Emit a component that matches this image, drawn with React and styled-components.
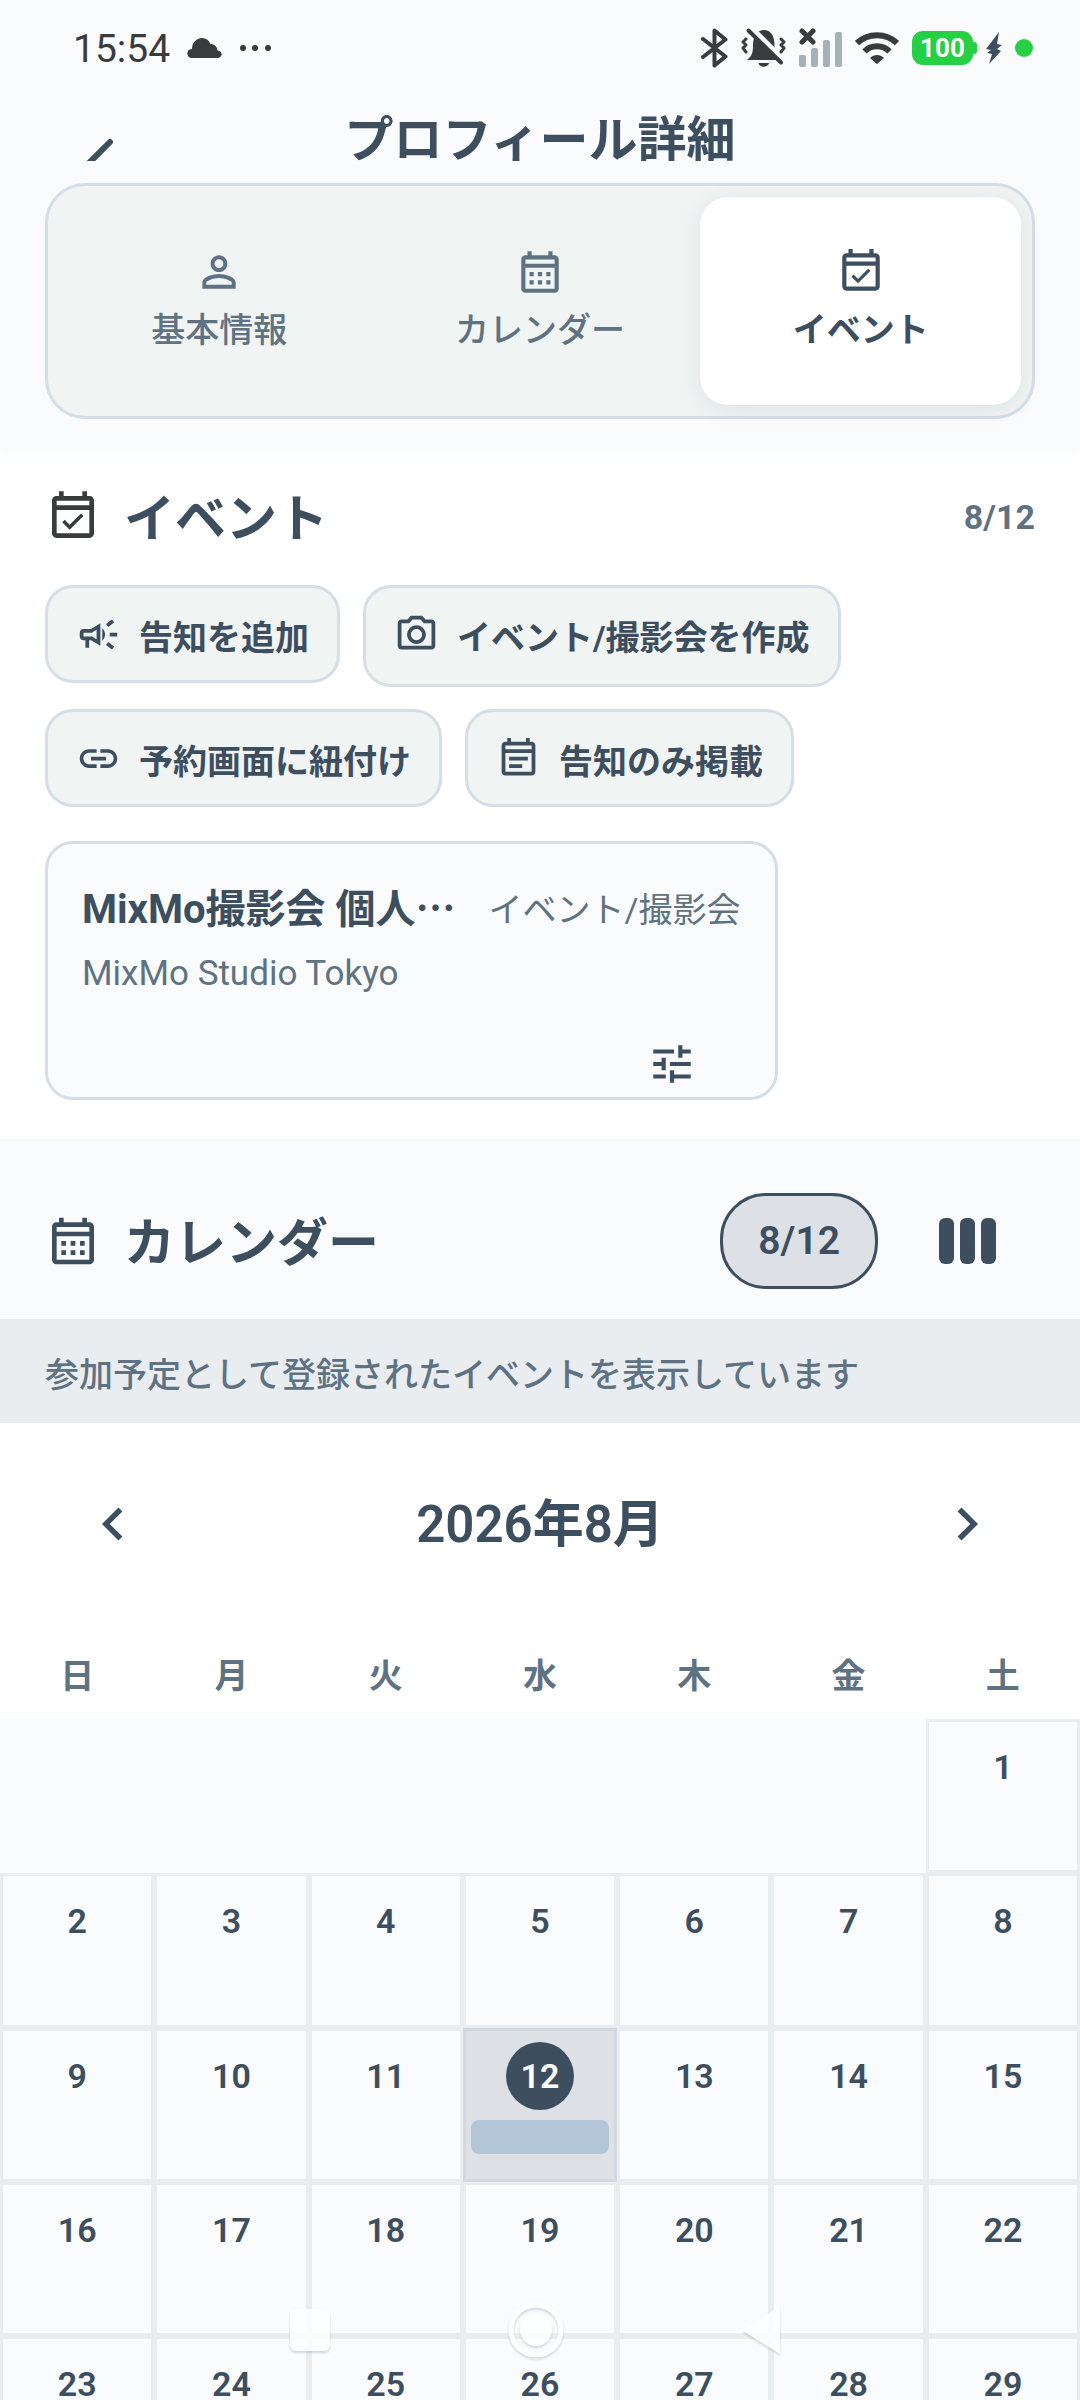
import { useState } from "react";
import styled, { createGlobalStyle } from "styled-components";
import {
    MdChevronLeft,
    MdChevronRight,
    MdLink,
    MdOutlineCalendarMonth,
    MdOutlineCampaign,
    MdOutlineEventAvailable,
    MdOutlineEventNote,
    MdOutlinePhotoCamera,
    MdPersonOutline,
    MdTune
} from "react-icons/md";

const tabs = [
    { id: "info", label: "基本情報", Icon: MdPersonOutline },
    { id: "calendar", label: "カレンダー", Icon: MdOutlineCalendarMonth },
    { id: "event", label: "イベント", Icon: MdOutlineEventAvailable }
];

const actions = [
    { label: "告知を追加", Icon: MdOutlineCampaign },
    { label: "イベント/撮影会を作成", Icon: MdOutlinePhotoCamera, tall: true },
    { label: "予約画面に紐付け", Icon: MdLink },
    { label: "告知のみ掲載", Icon: MdOutlineEventNote }
];

const weekdays = ["日", "月", "火", "水", "木", "金", "土"];
const emptyDays = [0, 1, 2, 3, 4, 5];
const days = Array.from({ length: 29 }, (_, i) => i + 1);

function StatusIcons() {
    return (
        <StatusGroup $gap={13}>
            <svg width="27" height="40" viewBox="0 0 27 40" fill="none" stroke="#3a3b3c" strokeWidth="4" strokeLinecap="round" strokeLinejoin="round">
                <path d="M2 11 L24.500 28.500 L13.500 37.500 V2.500 L24.500 11.500 L2 29" />
            </svg>
            <svg width="45" height="40" viewBox="0 0 45 40" fill="none" strokeLinecap="round" strokeLinejoin="round">
                <path d="M6 32 C11 28 12 25 12 17 C12 7 17 2 23 2 C29 2 33.500 7 33.500 17 C33.500 25 34 28 39 32 Z" fill="#3a3b3c" />
                <path d="M17.500 35 H28 C27 40 18.500 40 17.500 35 Z" fill="#3a3b3c" />
                <path d="M9 -1 L44 34" stroke="#f9fbfd" strokeWidth="6" />
                <path d="M7.500 2.500 L40 34.500" stroke="#3a3b3c" strokeWidth="4" />
                <path d="M5 11 L2 14 L5 17 L2 20 L5 24 M40 24 L43 20 L40 17 L43 14 L40 11" stroke="#3a3b3c" strokeWidth="3" />
            </svg>
            <svg width="43" height="40" viewBox="0 0 43 40">
                <g fill="#a5b0b7">
                    <rect x="0" y="27" width="7" height="12" rx="2" />
                    <rect x="12" y="20" width="7" height="19" rx="2" />
                    <rect x="24" y="12" width="7" height="27" rx="2" />
                    <rect x="36" y="4" width="7" height="35" rx="2" />
                </g>
                <path d="M3 3 L14 14 M14 3 L3 14" stroke="#3a3b3c" strokeWidth="5" strokeLinecap="round" />
            </svg>
            <svg width="44" height="32" viewBox="0 0 44 32" fill="none" stroke="#3a3b3c" strokeWidth="6">
                <path d="M2 11 C13 0.500 31 0.500 42 11" />
                <path d="M9.500 19.500 C16 12.500 28 12.500 34.500 19.500" />
                <path d="M15 26 C19 22 25 22 29 26 L22 32 Z" fill="#3a3b3c" stroke="none" />
            </svg>
            <StatusGroup $gap={8}>
                <Battery>100</Battery>
                <svg width="16" height="32" viewBox="0 0 16 32" fill="#3d4e5f">
                    <path d="M13 0 L0 17 L5 18 L1 21 L6 22 L3 32 L15 19 L11 17 L16 13 L11 12 Z" />
                </svg>
            </StatusGroup>
            <Dot />
        </StatusGroup>
    )
}

export default function App() {

    const [tab, setTab] = useState("event");
    const [selected, setSelected] = useState(12);

    return (
        <Screen>
            <GlobalStyle />

            <StatusBar>
                <StatusGroup $gap={17}>
                    <Clock>15:54</Clock>
                    <svg width="35" height="20" viewBox="0 0 35 20" fill="#3a3b3c">
                        <path d="M4 20 C-1 19 -1 11 5 11 C5 4 10 0 15 0 C19 0 22 2 23.500 6 C27 6 30 8 30.500 12.500 C36 13 36 19 31 20 Z" />
                    </svg>
                    <svg width="33" height="8" viewBox="0 0 33 8" fill="#3a3b3c">
                        <circle cx="4" cy="4" r="3" />
                        <circle cx="16" cy="4" r="3" />
                        <circle cx="29" cy="4" r="3" />
                    </svg>
                </StatusGroup>
                <StatusIcons />
            </StatusBar>

            <AppBar>
                <BackButton type="button" aria-label="戻る">
                    <svg width="30" height="52" viewBox="0 0 30 52" fill="none" stroke="#3d4e5f" strokeWidth="6" strokeLinecap="round" strokeLinejoin="round">
                        <path d="M26 4 L4 26 L26 48" />
                    </svg>
                </BackButton>
                <h1>プロフィール詳細</h1>
            </AppBar>

            <TabArea>
                <TabList role="tablist">
                    {tabs.map(({ id, label, Icon }) =>
                        <Tab key={id} type="button" role="tab" aria-selected={tab === id} $active={tab === id} onClick={() => setTab(id)}>
                            <Icon size={50} />
                            <span>{label}</span>
                        </Tab>
                    )}
                </TabList>
            </TabArea>

            <Content>
                <EventSection>
                    <SectionHeader>
                        <SectionTitle $iconColor="#3a3b3c">
                            <MdOutlineEventAvailable size={56} />
                            <span>イベント</span>
                        </SectionTitle>
                        <EventDate>8/12</EventDate>
                    </SectionHeader>

                    <ActionList>
                        {actions.map(({ label, Icon, tall }) =>
                            <ActionButton key={label} type="button" $tall={tall}>
                                <Icon size={45} />
                                <span>{label}</span>
                            </ActionButton>
                        )}
                    </ActionList>

                    <EventCard>
                        <EventCardTop>
                            <h3>MixMo撮影会 個人<Ellipsis>…</Ellipsis></h3>
                            <EventKind>イベント/撮影会</EventKind>
                        </EventCardTop>
                        <p>MixMo Studio Tokyo</p>
                        <TuneButton type="button" aria-label="設定">
                            <MdTune size={50} />
                        </TuneButton>
                    </EventCard>
                </EventSection>

                <CalendarHeader>
                    <SectionTitle $iconColor="#3d4e5f">
                        <MdOutlineCalendarMonth size={56} />
                        <span>カレンダー</span>
                    </SectionTitle>
                    <CalendarTools>
                        <DatePill type="button">8/12</DatePill>
                        <ColumnsButton type="button" aria-label="表示切替">
                            <i></i>
                            <i></i>
                            <i></i>
                        </ColumnsButton>
                    </CalendarTools>
                </CalendarHeader>

                <Notice>参加予定として登録されたイベントを表示しています</Notice>

                <MonthBar>
                    <MonthButton type="button" aria-label="前の月"><MdChevronLeft size={66} /></MonthButton>
                    <h2>2026年8月</h2>
                    <MonthButton type="button" aria-label="次の月"><MdChevronRight size={66} /></MonthButton>
                </MonthBar>

                <WeekRow>
                    {weekdays.map((item) => <span key={item}>{item}</span>)}
                </WeekRow>

                <DayGrid>
                    {emptyDays.map((item) => <EmptyDay key={item} />)}
                    {days.map((item) =>
                        <Day key={item} type="button" $selected={selected === item} onClick={() => setSelected(item)}>
                            <DayNumber $selected={selected === item}>{item}</DayNumber>
                            {item === 12 && <EventBar />}
                        </Day>
                    )}
                </DayGrid>
            </Content>

            <NavBar>
                <svg width="40" height="43" viewBox="0 0 40 43" fill="#fff">
                    <rect width="40" height="42" rx="6" />
                </svg>
                <svg width="58" height="58" viewBox="0 0 58 58" fill="#fff">
                    <circle cx="29" cy="29" r="25" fill="none" stroke="#fff" strokeWidth="5" />
                    <circle cx="29" cy="29" r="16" />
                </svg>
                <svg width="40" height="50" viewBox="0 0 40 50" fill="#fff">
                    <path d="M1 26 L38 1 V49 Z" />
                </svg>
            </NavBar>
        </Screen>
    )
}

const GlobalStyle = createGlobalStyle`
    * {
        box-sizing: border-box;
    }
    body {
        margin: 0;
        font-family: Roboto, "Noto Sans CJK JP", sans-serif;
        color: #3d4e5f;
        background-color: #fff;
    }
    h1, h2, h3, p {
        margin: 0;
    }
    button {
        font-family: inherit;
        color: inherit;
        padding: 0;
        border: none;
        background: none;
        cursor: pointer;
    }
    svg {
        display: block;
        flex-shrink: 0;
    }
`

const Screen = styled.div`
    position: relative;
    display: flex;
    flex-direction: column;
    height: 100vh;
    overflow: hidden;
`

const StatusBar = styled.div`
    display: flex;
    justify-content: space-between;
    align-items: center;
    height: 96px;
    padding: 0 47px 0 73px;
    background-color: #f9fbfd;
`

const StatusGroup = styled.div`
    display: flex;
    align-items: center;
    gap: ${({ $gap }) => $gap}px;
`

const Clock = styled.span`
    padding-top: 2px;
    font-size: 39px;
    line-height: 48px;
    font-weight: 400;
    color: #3a3b3c;
`

const Battery = styled.span`
    position: relative;
    width: 61px;
    height: 34px;
    margin-right: 5px;
    border-radius: 11px;
    background-color: #25d045;
    color: #fff;
    font-size: 26px;
    line-height: 34px;
    font-weight: 700;
    text-align: center;

    &::after {
        content: "";
        position: absolute;
        top: 11px;
        right: -4px;
        width: 6px;
        height: 12px;
        border-radius: 3px;
        background-color: #25d045;
    }
`

const Dot = styled.span`
    width: 18px;
    height: 18px;
    border-radius: 50%;
    background-color: #25d045;
`

const AppBar = styled.header`
    display: grid;
    grid-template-columns: 1fr auto 1fr;
    align-items: start;
    padding: 0 84px;
    background-color: #f9fbfd;

    h1 {
        padding-top: 25px;
        font-size: 49px;
        line-height: 40px;
        font-weight: 600;
    }
`

const BackButton = styled.button`
    display: flex;
    justify-self: start;
    align-items: flex-start;
    height: 65px;
    padding-top: 42px;
    overflow: hidden;
`

const TabArea = styled.nav`
    padding: 22px 45px 29px;
    background: linear-gradient(#f9fbfd, #f9fbfd);
    box-shadow: 0 3px 8px rgba(61, 78, 95, 0.04);
    clip-path: inset(0 0 -16px 0);
`

const TabList = styled.div`
    display: grid;
    grid-template-columns: repeat(3, 1fr);
    padding: 11px;
    border: 3px solid #d5dde6;
    border-radius: 40px;
    background-color: #f0f4f3;
`

const Tab = styled.button`
    display: flex;
    flex-direction: column;
    align-items: center;
    gap: 11px;
    height: 208px;
    padding-top: 50px;
    border-radius: 28px;
    background-color: ${({ $active }) => $active ? "#fff" : "transparent"};
    box-shadow: ${({ $active }) => $active ? "0 4px 22px rgba(61, 78, 95, 0.1)" : "none"};
    color: ${({ $active }) => $active ? "#3d4e5f" : "#5f7282"};
    font-size: 34px;
    line-height: 44px;
    font-weight: ${({ $active }) => $active ? 600 : 500};
`

const Content = styled.main`
    flex: 1;
    min-height: 0;
    overflow-y: auto;
    scrollbar-width: none;
`

const EventSection = styled.section`
    padding: 32px 45px 39px;
`

const SectionHeader = styled.div`
    display: flex;
    justify-content: space-between;
    align-items: center;
    margin-bottom: 31px;
`

const SectionTitle = styled.h2`
    display: flex;
    align-items: center;
    gap: 23px;
    font-size: 51px;
    line-height: 68px;
    font-weight: 700;

    svg {
        color: ${({ $iconColor }) => $iconColor};
    }
    span {
        padding-top: 6px;
    }
`

const EventDate = styled.span`
    font-size: 34px;
    line-height: 44px;
    font-weight: 700;
    color: #5f7282;
`

const ActionList = styled.div`
    display: flex;
    flex-wrap: wrap;
    align-items: flex-start;
    gap: 22px 23px;
    margin-bottom: 34px;
`

const ActionButton = styled.button`
    display: flex;
    align-items: center;
    gap: 18px;
    height: ${({ $tall }) => $tall ? 102 : 98}px;
    padding: 0 28px;
    border: 3px solid #d5dde6;
    border-radius: 28px;
    background-color: #f0f4f3;
    font-size: 34px;
    line-height: 48px;
    font-weight: 700;

    span {
        padding-top: ${({ $tall }) => $tall ? 4 : 8}px;
    }
    svg {
        margin-bottom: ${({ $tall }) => $tall ? 4 : 0}px;
    }
`

const EventCard = styled.article`
    display: flex;
    flex-direction: column;
    width: 74%;
    height: 259px;
    padding: 37px 34px 0;
    border: 3px solid #d5dde6;
    border-radius: 28px;
    background-color: #f9fbfd;

    p {
        margin-top: 11px;
        font-size: 35px;
        line-height: 48px;
        color: #5f7282;
    }
`

const EventCardTop = styled.div`
    display: flex;
    justify-content: space-between;
    align-items: center;

    h3 {
        font-size: 40px;
        line-height: 58px;
        font-weight: 700;
        white-space: nowrap;
    }
`

const EventKind = styled.span`
    font-size: 34px;
    line-height: 58px;
    color: #5f7282;
    white-space: nowrap;
`

const Ellipsis = styled.span`
    font-family: "Noto Sans CJK JP", sans-serif;
    line-height: 1;
`

const TuneButton = styled.button`
    align-self: flex-end;
    margin: auto 44px 8px 0;
`

const CalendarHeader = styled.div`
    display: flex;
    justify-content: space-between;
    align-items: center;
    padding: 54px 84px 30px 45px;
    background-color: #f9fbfd;
`

const CalendarTools = styled.div`
    display: flex;
    align-items: center;
    gap: 61px;
`

const DatePill = styled.button`
    height: 96px;
    padding: 0 35px;
    border: 3px solid #3d4e5f;
    border-radius: 46px;
    background-color: #dde1e6;
    font-size: 39px;
    font-weight: 600;
`

const ColumnsButton = styled.button`
    display: flex;
    gap: 6px;

    i {
        width: 15px;
        height: 46px;
        border-radius: 6px;
        background-color: #3d4e5f;
    }
`

const Notice = styled.p`
    padding: 32px 45px 24px;
    background-color: #e9edf0;
    color: #5f7282;
    font-size: 34px;
    line-height: 48px;
    font-weight: 500;
`

const MonthBar = styled.div`
    display: flex;
    justify-content: space-between;
    align-items: center;
    padding: 65px 80px;

    h2 {
        padding-top: 2px;
        font-size: 51px;
        line-height: 70px;
        font-weight: 600;
    }
`

const MonthButton = styled.button`
    width: 66px;
    height: 66px;
`

const WeekRow = styled.div`
    display: grid;
    grid-template-columns: repeat(7, 1fr);
    padding: 27px 0 19px;
    color: #5f7282;
    font-size: 34px;
    line-height: 48px;
    font-weight: 600;
    text-align: center;
`

const DayGrid = styled.div`
    display: grid;
    grid-template-columns: repeat(7, 1fr);
    background-color: #f9fbfd;
`

const EmptyDay = styled.div`
    aspect-ratio: 1;
`

const Day = styled.button`
    display: flex;
    flex-direction: column;
    align-items: center;
    gap: 10px;
    aspect-ratio: 1;
    padding: 11px 5px;
    border: 3px solid ${({ $selected }) => $selected ? "#d2d8dd" : "#e9edf0"};
    background-color: ${({ $selected }) => $selected ? "#dde1e6" : "#f9fbfd"};
`

const DayNumber = styled.span`
    width: 68px;
    height: 68px;
    border-radius: 50%;
    background-color: ${({ $selected }) => $selected ? "#3d4e5f" : "transparent"};
    color: ${({ $selected }) => $selected ? "#fff" : "#3d4e5f"};
    font-size: 34px;
    line-height: 68px;
    font-weight: 600;
    text-align: center;
`

const EventBar = styled.span`
    width: 100%;
    height: 34px;
    border-radius: 8px;
    background-color: #b2c6d7;
`

const NavBar = styled.div`
    position: absolute;
    left: 0;
    right: 0;
    bottom: 41px;
    display: flex;
    justify-content: center;
    align-items: center;
    gap: 177px;
    padding-right: 9px;
    pointer-events: none;

    svg {
        overflow: visible;
        opacity: 0.8;
        filter: drop-shadow(0 2px 1px rgba(61, 78, 95, 0.25));
    }
`
